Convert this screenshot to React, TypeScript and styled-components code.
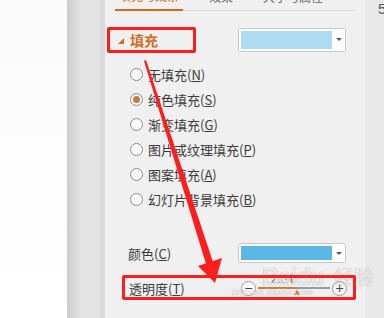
import React from "react";
import styled, { createGlobalStyle, css } from "styled-components";

const GlobalStyle = createGlobalStyle`
  html, body {
    margin: 0;
    padding: 0;
    overflow: hidden;
    background: #ffffff;
  }
  body {
    font-family: "Noto Sans CJK SC", "Liberation Sans", sans-serif;
  }
`;

const ORANGE = "#d4691e";
const RED = "#ff1e1e";

const Screen = styled.div`
  position: relative;
  display: flex;
  width: 384px;
  height: 318px;
  overflow: hidden;
`;

const LeftPane = styled.div`
  width: 67px;
  background: linear-gradient(to bottom, #fbfbfb, #ffffff);
`;

const Gutter = styled.div`
  width: 38px;
  background: linear-gradient(
    to right,
    #cdcdcd 0,
    #dcdcdc 10px,
    #e3e3e3 14px,
    #e3e3e3 33px,
    #d9d9d9 33px
  );
`;

const Panel = styled.div`
  width: 260px;
  background: #f0f0f0;
  display: flex;
  flex-direction: column;
  color: #3a3a3a;
  font-size: 13px;
`;

const RightStrip = styled.div`
  flex: 1;
  background: #e9e9e9;
  overflow: hidden;
  color: #555;
  font-family: "Liberation Sans", sans-serif;
  font-size: 15px;
  line-height: 16px;
  padding: 1px 0 0 13px;
`;

const TabBar = styled.div`
  display: flex;
  height: 10px;
  margin-left: 10px;
  width: 240px;
  border-bottom: 1px solid #d9d9d9;
  gap: 22px;
`;

const Tab = styled.div<{ $active?: boolean }>`
  height: 10px;
  padding: 0 4px;
  display: flex;
  align-items: flex-end;
  overflow: hidden;
  font-size: 12px;
  line-height: 14px;
  color: ${({ $active }) => ($active ? ORANGE : "#666")};
  ${({ $active }) =>
    $active &&
    css`
      height: 9px;
      border-bottom: 2px solid ${ORANGE};
      margin-bottom: -1px;
    `}

  span {
    margin-bottom: 6px;
    white-space: nowrap;
  }
`;

const HeaderRow = styled.div`
  display: flex;
  align-items: center;
  height: 25px;
  margin-top: 16px;
`;

const SectionToggle = styled.div`
  display: flex;
  align-items: center;
  width: 133px;
  padding-left: 13px;
  box-sizing: border-box;
  color: ${ORANGE};
  font-weight: 700;
  font-size: 14px;
`;

const Caret = styled.span`
  width: 0;
  height: 0;
  border-left: 6px solid transparent;
  border-bottom: 6px solid ${ORANGE};
  margin: 3px 6px 0 0;
`;

const Dropdown = styled.div<{ $h: number }>`
  display: flex;
  align-items: stretch;
  width: 108px;
  height: ${({ $h }) => $h}px;
  box-sizing: border-box;
  border: 1px solid #c8c8c8;
  border-radius: 3px;
  background: #ffffff;
  padding: 2px 0 2px 2px;
`;

const Swatch = styled.div<{ $color: string }>`
  flex: 1;
  background: ${({ $color }) => $color};
`;

const DropArrow = styled.div`
  width: 13px;
  display: flex;
  align-items: center;
  justify-content: center;

  &::after {
    content: "";
    border-left: 3px solid transparent;
    border-right: 3px solid transparent;
    border-top: 3px solid #5a5a6a;
  }
`;

const RadioList = styled.div`
  display: flex;
  flex-direction: column;
  margin-top: 10px;
  padding-left: 25px;
`;

const RadioRow = styled.label`
  display: flex;
  align-items: center;
  height: 25px;
  gap: 5px;
  white-space: nowrap;
`;

const RadioCircle = styled.span<{ $checked?: boolean }>`
  width: 13px;
  height: 13px;
  box-sizing: border-box;
  border: 1px solid #8d8d8d;
  border-radius: 50%;
  background: #fafafa;
  display: flex;
  align-items: center;
  justify-content: center;

  &::after {
    content: "";
    width: 7px;
    height: 7px;
    border-radius: 50%;
    background: ${({ $checked }) => ($checked ? "#c27a4c" : "transparent")};
  }
`;

const FieldRow = styled.div<{ $top: number; $indent: number }>`
  display: flex;
  align-items: center;
  height: 20px;
  margin-top: ${({ $top }) => $top}px;
  padding-left: ${({ $indent }) => $indent}px;
`;

const FieldLabel = styled.div<{ $w: number }>`
  width: ${({ $w }) => $w}px;
  white-space: nowrap;
`;

const Slider = styled.div`
  display: flex;
  align-items: center;
  padding-left: 3px;
  gap: 2px;
`;

const StepButton = styled.div`
  width: 15px;
  height: 15px;
  box-sizing: border-box;
  border: 1px solid #9a9a9a;
  border-radius: 50%;
  background: #fbfbfb;
  display: flex;
  align-items: center;
  justify-content: center;
  color: #444;
  font-family: "Liberation Sans", sans-serif;
  font-size: 14px;
  line-height: 1;
`;

const Track = styled.div`
  position: relative;
  width: 72px;
  height: 2px;
  background: linear-gradient(to right, #d07a45 0, #d07a45 52%, #9a9a9a 52%);
`;

const Thumb = styled.div`
  position: absolute;
  left: 36px;
  top: 2px;
  width: 0;
  height: 0;
  border-left: 3px solid transparent;
  border-right: 3px solid transparent;
  border-bottom: 6px solid #d07a45;
`;

const Percent = styled.div`
  position: absolute;
  left: 13px;
  top: -14px;
  font-family: "Liberation Sans", sans-serif;
  font-size: 12px;
  line-height: 12px;
  color: #555;
`;

const Watermark = styled.div`
  position: absolute;
  left: 262px;
  top: 262px;
  pointer-events: none;
  color: rgba(255, 255, 255, 0.75);
  text-shadow: 0 0 1px rgba(0, 0, 0, 0.35);
  white-space: nowrap;

  b {
    font-family: "Liberation Sans", sans-serif;
    font-size: 24px;
    letter-spacing: -1px;
  }
  span {
    font-size: 20px;
    margin-left: 10px;
  }
  small {
    display: block;
    margin-top: -4px;
    font-family: "Liberation Sans", sans-serif;
    font-size: 9px;
    letter-spacing: 0.5px;
    margin-left: -30px;
  }
`;

const RedBox = styled.div<{ $x: number; $y: number; $w: number; $h: number }>`
  position: absolute;
  left: ${({ $x }) => $x}px;
  top: ${({ $y }) => $y}px;
  width: ${({ $w }) => $w}px;
  height: ${({ $h }) => $h}px;
  box-sizing: border-box;
  border: 3px solid ${RED};
  border-radius: 2px;
  pointer-events: none;
`;

const ArrowLayer = styled.svg`
  position: absolute;
  left: 0;
  top: 0;
  pointer-events: none;
`;

const fills = [
  { text: "无填充", key: "N" },
  { text: "纯色填充", key: "S", checked: true },
  { text: "渐变填充", key: "G" },
  { text: "图片或纹理填充", key: "P" },
  { text: "图案填充", key: "A" },
  { text: "幻灯片背景填充", key: "B" },
];

export default function App() {
  return (
    <>
      <GlobalStyle />
      <Screen>
        <LeftPane />
        <Gutter />
        <Panel>
          <TabBar>
            <Tab $active>
              <span>填充与线条</span>
            </Tab>
            <Tab>
              <span>效果</span>
            </Tab>
            <Tab>
              <span>大小与属性</span>
            </Tab>
          </TabBar>

          <HeaderRow>
            <SectionToggle>
              <Caret />
              填充
            </SectionToggle>
            <Dropdown $h={24}>
              <Swatch $color="#addcf2" />
              <DropArrow />
            </Dropdown>
          </HeaderRow>

          <RadioList>
            {fills.map((f) => (
              <RadioRow key={f.key}>
                <RadioCircle $checked={f.checked} />
                <span>
                  {f.text}(<u>{f.key}</u>)
                </span>
              </RadioRow>
            ))}
          </RadioList>

          <FieldRow $top={31} $indent={23}>
            <FieldLabel $w={110}>
              颜色(<u>C</u>)
            </FieldLabel>
            <Dropdown $h={20}>
              <Swatch $color="#5bb7e3" />
              <DropArrow />
            </Dropdown>
          </FieldRow>

          <FieldRow $top={15} $indent={24}>
            <FieldLabel $w={109}>
              透明度(<u>T</u>)
            </FieldLabel>
            <Slider>
              <StepButton>−</StepButton>
              <Track>
                <Percent>21%</Percent>
                <Thumb />
              </Track>
              <StepButton>+</StepButton>
            </Slider>
          </FieldRow>
        </Panel>
        <RightStrip>5</RightStrip>

        <Watermark>
          <b>Bai</b>
          <b>du</b>
          <span>经验</span>
          <small>jingyan.baidu.com</small>
        </Watermark>

        <RedBox $x={107} $y={27} $w={89} $h={26} />
        <RedBox $x={122} $y={275} $w={234} $h={25} />

        <ArrowLayer width={384} height={318} viewBox="0 0 384 318">
          <polygon points="144,61 146,60 213,262 206,264" fill={RED} />
          <polygon points="198,266 222,258 215,283" fill={RED} />
        </ArrowLayer>
      </Screen>
    </>
  );
}
